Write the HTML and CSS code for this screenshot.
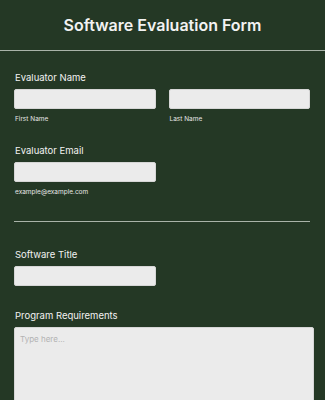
FILE: index.html
```html
<!DOCTYPE html>
<html lang="en">
<head>
  <meta charset="UTF-8" />
  <meta name="viewport" content="width=device-width, initial-scale=1.0"/>
  <title>Software Evaluation Form</title>
  <link rel="stylesheet" href="styles.css">
</head>
<body>
  <header class="form-header">
    <h1>Software Evaluation Form</h1>
  </header>

  <form class="form-body">
    <div class="field">
      <label class="field-label">Evaluator Name</label>
      <div class="name-row">
        <div class="sub">
          <input type="text" class="text-input" />
          <span class="sublabel">First Name</span>
        </div>
        <div class="sub">
          <input type="text" class="text-input" />
          <span class="sublabel">Last Name</span>
        </div>
      </div>
    </div>

    <div class="field field-email">
      <label class="field-label">Evaluator Email</label>
      <div class="sub half">
        <input type="email" class="text-input" />
        <span class="sublabel">example@example.com</span>
      </div>
    </div>

    <div class="divider"></div>

    <div class="field field-title">
      <label class="field-label">Software Title</label>
      <div class="sub half">
        <input type="text" class="text-input" />
      </div>
    </div>

    <div class="field field-req">
      <label class="field-label">Program Requirements</label>
      <textarea class="text-area" placeholder="Type here..."></textarea>
    </div>
  </form>
</body>
</html>
```

FILE: styles.css
```css
:root {
  --bg: #243825;
  --text: #f2f2f2;
  --input-bg: #ebebeb;
  --line: #a9b3a9;
}

body {
  margin: 0;
  font-family: Inter, 'Noto Sans', sans-serif;
  background: var(--bg);
  color: var(--text);
  overflow: hidden;
}

.form-header {
  height: 50px;
  display: flex;
  align-items: center;
  justify-content: center;
  border-bottom: 1px solid var(--line);
}

h1 {
  margin: 0;
  font-size: 16px;
  font-weight: 600;
}

.form-body {
  padding: 21px 14px 0 14px;
}

.field-label {
  display: block;
  font-size: 9.5px;
  line-height: 12px;
  margin-bottom: 5px;
  padding-left: 1px;
}

.name-row {
  display: flex;
  gap: 13px;
  padding-right: 1px;
}

.sub {
  flex: 1;
  display: flex;
  flex-direction: column;
}

.half {
  width: 142px;
}

.text-input {
  box-sizing: border-box;
  width: 100%;
  height: 20px;
  margin: 0;
  border: 1px solid #d6d6d6;
  border-radius: 2px;
  background: var(--input-bg);
}

.sublabel {
  font-size: 6.5px;
  line-height: 9px;
  margin-top: 6px;
  padding-left: 1px;
  color: #e6e6e6;
}

.field-email {
  margin-top: 21px;
}

.divider {
  height: 1px;
  background: var(--line);
  margin: 24px 1px 0 0;
}

.field-title {
  margin-top: 27px;
}

.field-req {
  margin-top: 24px;
}

.text-area {
  display: block;
  box-sizing: border-box;
  width: calc(100% + 3px);
  height: 90px;
  margin: 0;
  padding: 6px 5px;
  border: 1px solid #d6d6d6;
  border-radius: 2px;
  background: var(--input-bg);
  font-family: Inter, 'Noto Sans', sans-serif;
  font-size: 8px;
  resize: none;
}

.text-area::placeholder {
  color: #b3b3b3;
}
```
